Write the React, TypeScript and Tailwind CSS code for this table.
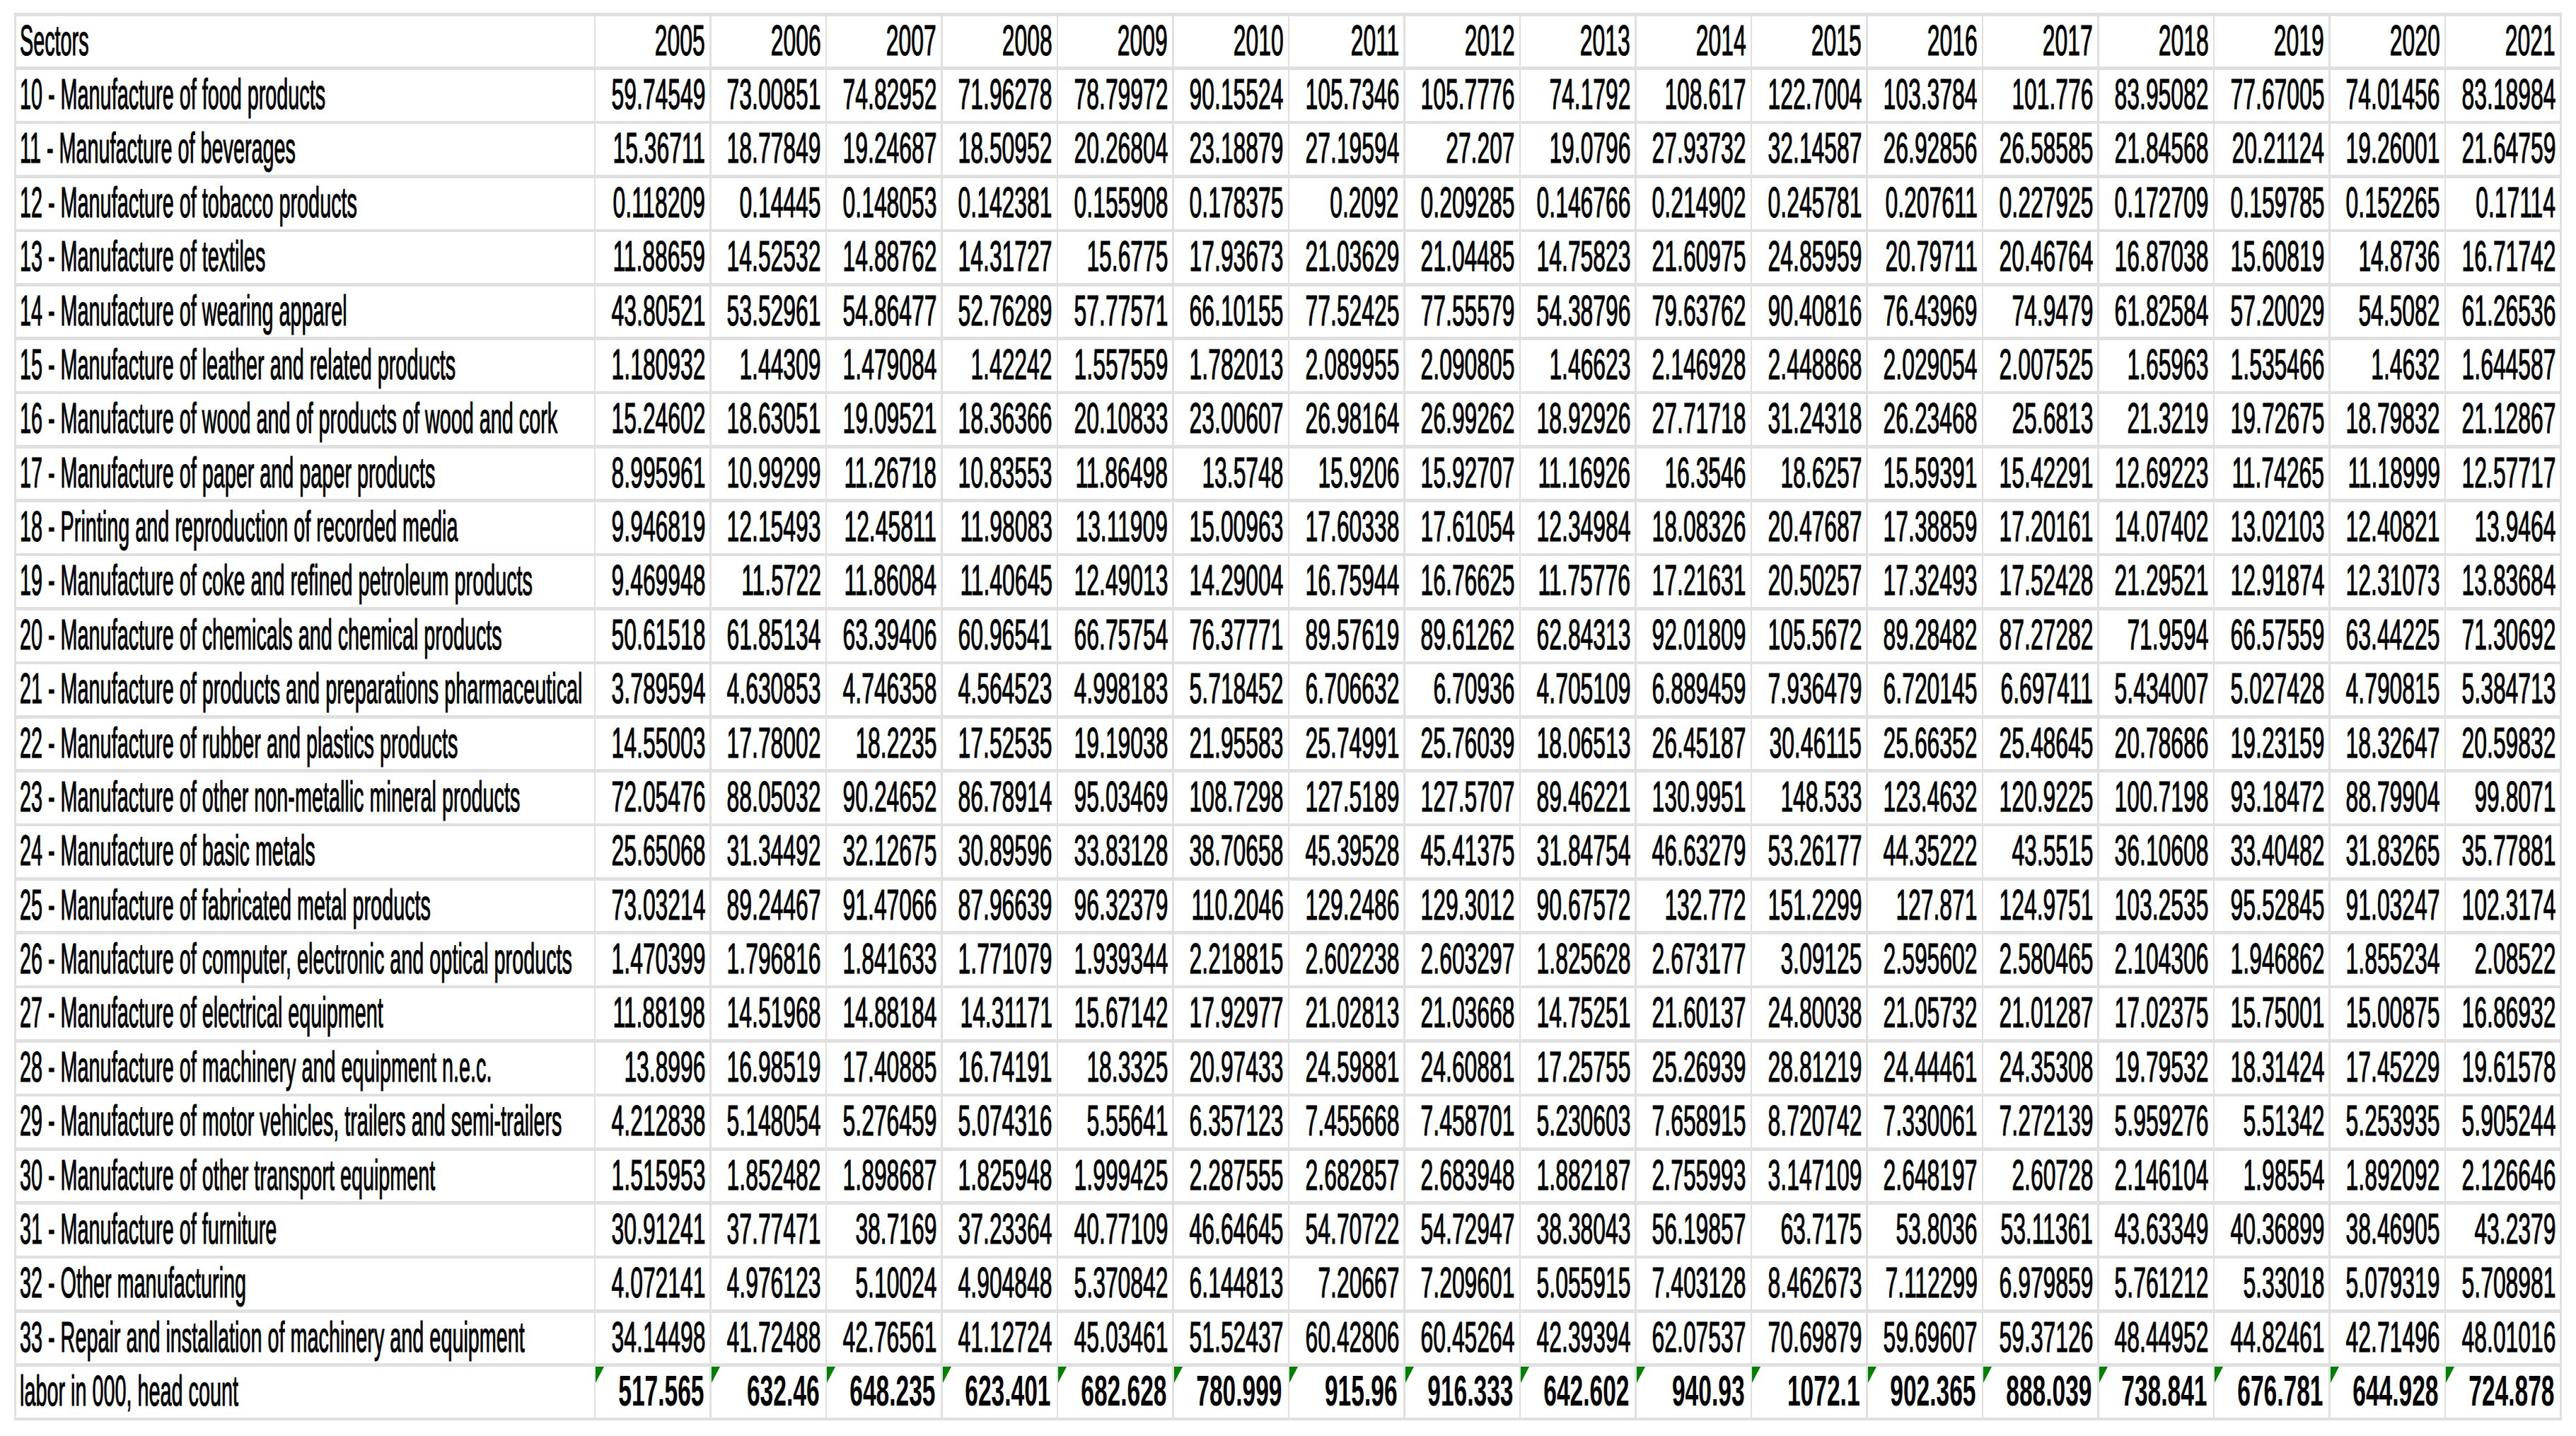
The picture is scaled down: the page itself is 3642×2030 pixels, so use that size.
import React from "react";

const years = [2005, 2006, 2007, 2008, 2009, 2010, 2011, 2012, 2013, 2014, 2015, 2016, 2017, 2018, 2019, 2020, 2021];

const rows: [string, string[]][] = [
  ["10 - Manufacture of food products", "59.74549 73.00851 74.82952 71.96278 78.79972 90.15524 105.7346 105.7776 74.1792 108.617 122.7004 103.3784 101.776 83.95082 77.67005 74.01456 83.18984".split(" ")],
  ["11 - Manufacture of beverages", "15.36711 18.77849 19.24687 18.50952 20.26804 23.18879 27.19594 27.207 19.0796 27.93732 32.14587 26.92856 26.58585 21.84568 20.21124 19.26001 21.64759".split(" ")],
  ["12 - Manufacture of tobacco products", "0.118209 0.14445 0.148053 0.142381 0.155908 0.178375 0.2092 0.209285 0.146766 0.214902 0.245781 0.207611 0.227925 0.172709 0.159785 0.152265 0.17114".split(" ")],
  ["13 - Manufacture of textiles", "11.88659 14.52532 14.88762 14.31727 15.6775 17.93673 21.03629 21.04485 14.75823 21.60975 24.85959 20.79711 20.46764 16.87038 15.60819 14.8736 16.71742".split(" ")],
  ["14 - Manufacture of wearing apparel", "43.80521 53.52961 54.86477 52.76289 57.77571 66.10155 77.52425 77.55579 54.38796 79.63762 90.40816 76.43969 74.9479 61.82584 57.20029 54.5082 61.26536".split(" ")],
  ["15 - Manufacture of leather and related products", "1.180932 1.44309 1.479084 1.42242 1.557559 1.782013 2.089955 2.090805 1.46623 2.146928 2.448868 2.029054 2.007525 1.65963 1.535466 1.4632 1.644587".split(" ")],
  ["16 - Manufacture of wood and of products of wood and cork", "15.24602 18.63051 19.09521 18.36366 20.10833 23.00607 26.98164 26.99262 18.92926 27.71718 31.24318 26.23468 25.6813 21.3219 19.72675 18.79832 21.12867".split(" ")],
  ["17 - Manufacture of paper and paper products", "8.995961 10.99299 11.26718 10.83553 11.86498 13.5748 15.9206 15.92707 11.16926 16.3546 18.6257 15.59391 15.42291 12.69223 11.74265 11.18999 12.57717".split(" ")],
  ["18 - Printing and reproduction of recorded media", "9.946819 12.15493 12.45811 11.98083 13.11909 15.00963 17.60338 17.61054 12.34984 18.08326 20.47687 17.38859 17.20161 14.07402 13.02103 12.40821 13.9464".split(" ")],
  ["19 - Manufacture of coke and refined petroleum products", "9.469948 11.5722 11.86084 11.40645 12.49013 14.29004 16.75944 16.76625 11.75776 17.21631 20.50257 17.32493 17.52428 21.29521 12.91874 12.31073 13.83684".split(" ")],
  ["20 - Manufacture of chemicals and chemical products", "50.61518 61.85134 63.39406 60.96541 66.75754 76.37771 89.57619 89.61262 62.84313 92.01809 105.5672 89.28482 87.27282 71.9594 66.57559 63.44225 71.30692".split(" ")],
  ["21 - Manufacture of products and preparations pharmaceutical", "3.789594 4.630853 4.746358 4.564523 4.998183 5.718452 6.706632 6.70936 4.705109 6.889459 7.936479 6.720145 6.697411 5.434007 5.027428 4.790815 5.384713".split(" ")],
  ["22 - Manufacture of rubber and plastics products", "14.55003 17.78002 18.2235 17.52535 19.19038 21.95583 25.74991 25.76039 18.06513 26.45187 30.46115 25.66352 25.48645 20.78686 19.23159 18.32647 20.59832".split(" ")],
  ["23 - Manufacture of other non-metallic mineral products", "72.05476 88.05032 90.24652 86.78914 95.03469 108.7298 127.5189 127.5707 89.46221 130.9951 148.533 123.4632 120.9225 100.7198 93.18472 88.79904 99.8071".split(" ")],
  ["24 - Manufacture of basic metals", "25.65068 31.34492 32.12675 30.89596 33.83128 38.70658 45.39528 45.41375 31.84754 46.63279 53.26177 44.35222 43.5515 36.10608 33.40482 31.83265 35.77881".split(" ")],
  ["25 - Manufacture of fabricated metal products", "73.03214 89.24467 91.47066 87.96639 96.32379 110.2046 129.2486 129.3012 90.67572 132.772 151.2299 127.871 124.9751 103.2535 95.52845 91.03247 102.3174".split(" ")],
  ["26 - Manufacture of computer, electronic and optical products", "1.470399 1.796816 1.841633 1.771079 1.939344 2.218815 2.602238 2.603297 1.825628 2.673177 3.09125 2.595602 2.580465 2.104306 1.946862 1.855234 2.08522".split(" ")],
  ["27 - Manufacture of electrical equipment", "11.88198 14.51968 14.88184 14.31171 15.67142 17.92977 21.02813 21.03668 14.75251 21.60137 24.80038 21.05732 21.01287 17.02375 15.75001 15.00875 16.86932".split(" ")],
  ["28 - Manufacture of machinery and equipment n.e.c.", "13.8996 16.98519 17.40885 16.74191 18.3325 20.97433 24.59881 24.60881 17.25755 25.26939 28.81219 24.44461 24.35308 19.79532 18.31424 17.45229 19.61578".split(" ")],
  ["29 - Manufacture of motor vehicles, trailers and semi-trailers", "4.212838 5.148054 5.276459 5.074316 5.55641 6.357123 7.455668 7.458701 5.230603 7.658915 8.720742 7.330061 7.272139 5.959276 5.51342 5.253935 5.905244".split(" ")],
  ["30 - Manufacture of other transport equipment", "1.515953 1.852482 1.898687 1.825948 1.999425 2.287555 2.682857 2.683948 1.882187 2.755993 3.147109 2.648197 2.60728 2.146104 1.98554 1.892092 2.126646".split(" ")],
  ["31 - Manufacture of furniture", "30.91241 37.77471 38.7169 37.23364 40.77109 46.64645 54.70722 54.72947 38.38043 56.19857 63.7175 53.8036 53.11361 43.63349 40.36899 38.46905 43.2379".split(" ")],
  ["32 - Other manufacturing", "4.072141 4.976123 5.10024 4.904848 5.370842 6.144813 7.20667 7.209601 5.055915 7.403128 8.462673 7.112299 6.979859 5.761212 5.33018 5.079319 5.708981".split(" ")],
  ["33 - Repair and installation of machinery and equipment", "34.14498 41.72488 42.76561 41.12724 45.03461 51.52437 60.42806 60.45264 42.39394 62.07537 70.69879 59.69607 59.37126 48.44952 44.82461 42.71496 48.01016".split(" ")],
];

const labor = "517.565 632.46 648.235 623.401 682.628 780.999 915.96 916.333 642.602 940.93 1072.1 902.365 888.039 738.841 676.781 644.928 724.878".split(" ");

function LabelCell({ text }: { text: string }) {
  return (
    <div className="bg-white h-[71.7px] flex justify-start pl-[5px] overflow-hidden">
      <span className="block shrink-0 whitespace-nowrap text-[61px] leading-[68px] text-black [-webkit-text-stroke:1.2px_#000] scale-x-[0.472] origin-left">
        {text}
      </span>
    </div>
  );
}

function NumCell({ text }: { text: string }) {
  return (
    <div className="bg-white h-[71.7px] flex justify-end pr-[6px] overflow-hidden">
      <span className="block shrink-0 whitespace-nowrap text-[61px] leading-[68px] text-black [-webkit-text-stroke:1.2px_#000] scale-x-[0.522] origin-right">
        {text}
      </span>
    </div>
  );
}

function BoldCell({ text }: { text: string }) {
  return (
    <div className="relative bg-white h-[71.7px] flex justify-end pr-[8px] overflow-hidden">
      <svg className="absolute left-0 top-0 w-[12px] h-[23px]" viewBox="0 0 12 23">
        <polygon points="0,0 12,0 0,23" fill="#008000" />
      </svg>
      <span className="block shrink-0 whitespace-nowrap text-[61px] leading-[68px] font-bold text-black scale-x-[0.55] origin-right">
        {text}
      </span>
    </div>
  );
}

export default function App() {
  return (
    <div className="w-[3642px] h-[2030px] bg-white pt-[18px] pl-[20px] font-['Liberation_Sans',Arial,sans-serif]">
      <div className="w-fit grid grid-cols-[817px_repeat(17,161px)] gap-x-[2.5px] gap-y-[4.7px] bg-[#e0e0e0] px-[2.5px] py-[4.7px]">
        <LabelCell text="Sectors" />
        {years.map((y) => (
          <NumCell key={y} text={String(y)} />
        ))}
        {rows.map(([label, vals]) => (
          <React.Fragment key={label}>
            <LabelCell text={label} />
            {vals.map((v, i) => (
              <NumCell key={i} text={v} />
            ))}
          </React.Fragment>
        ))}
        <LabelCell text="labor in 000, head count" />
        {labor.map((v, i) => (
          <BoldCell key={i} text={v} />
        ))}
      </div>
    </div>
  );
}
